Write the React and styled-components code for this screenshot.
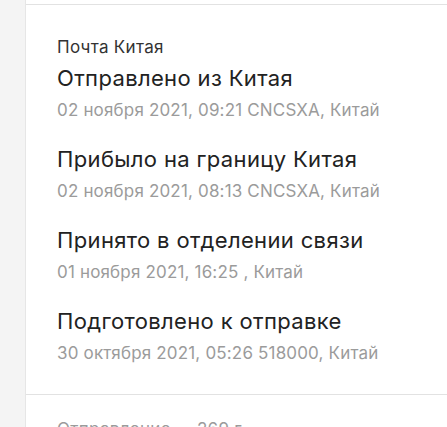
import React from 'react';
import styled, { createGlobalStyle } from 'styled-components';

const GlobalStyle = createGlobalStyle`
    html, body {
        margin: 0;
        padding: 0;
        background: #ffffff;
    }
    body {
        font-family: 'Inter', 'Noto Sans', sans-serif;
        overflow: hidden;
    }
`;

const Page = styled.div`
    display: flex;
    height: 427px;
    overflow: hidden;
`;

const Sidebar = styled.div`
    width: 25px;
    flex-shrink: 0;
    background: #f4f4f4;
    border-right: 1px solid #e6e6e6;
`;

const Main = styled.div`
    flex: 1;
    display: flex;
    flex-direction: column;
    padding-top: 4px;
`;

const Section = styled.section`
    border-top: 1px solid #e2e2e2;
    padding: 30px 0 27px 31px;
`;

const Carrier = styled.div`
    font-size: 17px;
    line-height: 24px;
    letter-spacing: 0.3px;
    color: #333333;
    margin-bottom: 5px;
`;

const Event = styled.div`
    display: flex;
    flex-direction: column;
    margin-bottom: 21px;
    &:last-child {
        margin-bottom: 0;
    }
`;

const Title = styled.div`
    font-size: 22px;
    line-height: 28px;
    letter-spacing: 0.35px;
    color: #222222;
`;

const Meta = styled.div`
    font-size: 17px;
    line-height: 28px;
    letter-spacing: 0.17px;
    margin-top: 4px;
    color: #9b9b9b;
`;

const Footer = styled.div`
    border-top: 1px solid #e2e2e2;
    padding: 22px 0 0 31px;
    display: flex;
    gap: 26px;
    font-size: 17px;
    line-height: 24px;
    letter-spacing: 0.3px;
    color: #9b9b9b;
`;

const events = [
    { title: 'Отправлено из Китая', meta: '02 ноября 2021, 09:21 CNCSXA, Китай' },
    { title: 'Прибыло на границу Китая', meta: '02 ноября 2021, 08:13 CNCSXA, Китай' },
    { title: 'Принято в отделении связи', meta: '01 ноября 2021, 16:25 , Китай' },
    { title: 'Подготовлено к отправке', meta: '30 октября 2021, 05:26 518000, Китай' },
];

export default function App() {
    return (
        <Page>
            <GlobalStyle />
            <Sidebar />
            <Main>
                <Section>
                    <Carrier>Почта Китая</Carrier>
                    {events.map(e => (
                        <Event key={e.title}>
                            <Title>{e.title}</Title>
                            <Meta>{e.meta}</Meta>
                        </Event>
                    ))}
                </Section>
                <Footer>
                    <span>Отправление</span>
                    <span>269 г</span>
                </Footer>
            </Main>
        </Page>
    );
}
